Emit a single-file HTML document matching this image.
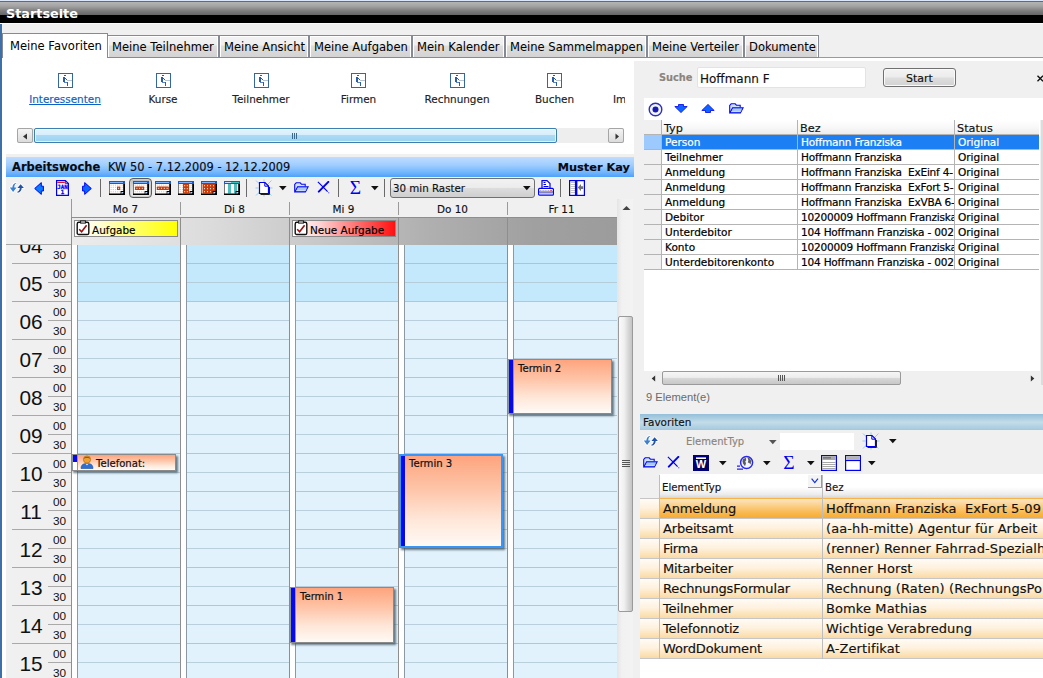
<!DOCTYPE html>
<html lang="de">
<head>
<meta charset="utf-8">
<title>Startseite</title>
<style>
*{box-sizing:border-box;margin:0;padding:0}
html,body{width:1043px;height:678px;overflow:hidden;background:#fff}
body{position:relative;font-family:"DejaVu Sans","Liberation Sans",sans-serif;font-size:11.25px;color:#000;-webkit-text-stroke:0.15px}
.a{position:absolute}
.v{font-family:"DejaVu Sans","Liberation Sans",sans-serif}
.t{font-family:"DejaVu Sans","Liberation Sans",sans-serif}
.l{font-family:"Liberation Sans",sans-serif}
.nw{white-space:nowrap}
/* title */
#title{left:0;top:0;width:1043px;height:23px;background:linear-gradient(#dce6fa 0,#dce6fa 1px,#5a6a8c 1px,#5a6a8c 2px,#b6b4b4 2px,#a4a4a4 6px,#7c7c7c 11px,#666 15px,#000 15px,#000 100%)}
#title span{-webkit-text-stroke:0;position:absolute;left:6px;top:6px;color:#fff;font-weight:bold;font-size:12.8px;line-height:16px}
#lb{left:0;top:24px;width:2px;height:654px;background:#3d6fa8}
#tabbar{left:2px;top:23px;width:1041px;height:35px;border-top:1px solid #fbfbfb;background:#f0f0f0;border-bottom:1px solid #9a9a9a}
.tab{position:absolute;top:35px;height:23px;border:1px solid #868a96;background:linear-gradient(#f3f3f3 0,#efefef 9px,#dedede 10px,#d3d3d3 100%);box-shadow:inset 1px 1px 0 #fff,inset -1px 0 0 #fff;font-size:11.55px;line-height:23px;text-align:left;padding-left:4px;white-space:nowrap;-webkit-text-stroke:0}
.tab.act{top:33px;height:25px;background:#fff;border-bottom:none;line-height:24px;box-shadow:none;z-index:2;padding-left:7px}

.fl{top:92px;width:100px;text-align:center;font-size:10.45px;line-height:14px}
.sbb{width:16px;height:15px;border:1px solid #a5a5a5;border-radius:2px;background:linear-gradient(#f4f4f4,#dcdcdc)}
/*CALCSS*/
.dh{top:202px;text-align:center;font-size:10.45px;line-height:15px;color:#111}
.gd{background:repeating-linear-gradient(#c4e9fc 0,#c4e9fc 18px,#9fc9e3 18px,#9fc9e3 19px,#c4e9fc 19px,#c4e9fc 37px,#b5cdda 37px,#b5cdda 38px)}
.gl{background:repeating-linear-gradient(#a2cbe4 0,#a2cbe4 1px,#e2f2fc 1px,#e2f2fc 19px,#b9d0dc 19px,#b9d0dc 20px,#e2f2fc 20px,#e2f2fc 38px)}
.hr{-webkit-text-stroke:0;font-size:20.8px;line-height:24px;color:#111;width:24px;text-align:center}
.mn{-webkit-text-stroke:0;font-size:11.8px;line-height:12px;color:#111}
.ap{border:1px solid #8a8a8a;box-shadow:2px 2px 2px rgba(60,80,95,.75);background:linear-gradient(#fda47e 0,#fec3a6 35%,#ffe6d8 70%,#fffaf6 100%)}
.ap span{-webkit-text-stroke:0.2px;position:absolute;left:10px;top:1.5px;font-size:10.09px;line-height:14px;white-space:nowrap;color:#111}
/*CALCSS_END*//*RCSS*/
.th1{top:121px;font-size:11.25px;line-height:15px;color:#111}
.td1{font-size:10.54px;line-height:14px;white-space:pre;-webkit-text-stroke:0.2px}
.r2{height:20px;border-bottom:1px solid #c6c6c6;background:linear-gradient(#fffbf5 0,#fef2e0 45%,#fce3ba 80%,#fbd9a4 100%);font-size:13px;line-height:19px;color:#111;white-space:pre}
.r2s{background:linear-gradient(#fde6c2 0,#fbcf88 35%,#f9b74c 75%,#f8aa32 100%)}
/*RCSS_END*/</style>
</head>
<body>
<div id="title" class="a"><span class="v">Startseite</span></div>
<div id="lb" class="a"></div>
<div id="tabbar" class="a"></div>
<div class="tab act" style="left:2px;width:106px">Meine Favoriten</div>
<div class="tab" style="left:107px;width:112px">Meine Teilnehmer</div>
<div class="tab" style="left:219px;width:90px">Meine Ansicht</div>
<div class="tab" style="left:309px;width:103px">Meine Aufgaben</div>
<div class="tab" style="left:412px;width:93px">Mein Kalender</div>
<div class="tab" style="left:505px;width:142px">Meine Sammelmappen</div>
<div class="tab" style="left:647px;width:97px">Meine Verteiler</div>
<div class="tab" style="left:744px;width:75px">Dokumente</div>
<div id="favbar">
<svg class="a" style="left:58px;top:73px" width="15" height="15" viewBox="0 0 15 15"><rect x=".5" y=".5" width="14" height="14" fill="#fff" stroke="#3465a4"/><rect x="6" y="2" width="2" height="1" fill="#2a5ca8"/><rect x="5" y="4" width="2" height="5" fill="#2a5ca8"/><rect x="7" y="5" width="1" height="1" fill="#2a5ca8"/><rect x="8" y="6" width="1" height="1" fill="#2a5ca8"/><rect x="6" y="9" width="4" height="1" fill="#5d86bf"/><rect x="9" y="9" width="1" height="4" fill="#2a5ca8"/><rect x="9" y="7" width="5" height="1" fill="#b9c3d0"/></svg>
<div class="a t nw fl" style="left:15px;color:#0b62c4;text-decoration:underline;">Interessenten</div>
<svg class="a" style="left:156px;top:73px" width="15" height="15" viewBox="0 0 15 15"><rect x=".5" y=".5" width="14" height="14" fill="#fff" stroke="#3465a4"/><rect x="6" y="2" width="2" height="1" fill="#2a5ca8"/><rect x="5" y="4" width="2" height="5" fill="#2a5ca8"/><rect x="7" y="5" width="1" height="1" fill="#2a5ca8"/><rect x="8" y="6" width="1" height="1" fill="#2a5ca8"/><rect x="6" y="9" width="4" height="1" fill="#5d86bf"/><rect x="9" y="9" width="1" height="4" fill="#2a5ca8"/><rect x="9" y="7" width="5" height="1" fill="#b9c3d0"/></svg>
<div class="a t nw fl" style="left:113px;color:#222;">Kurse</div>
<svg class="a" style="left:254px;top:73px" width="15" height="15" viewBox="0 0 15 15"><rect x=".5" y=".5" width="14" height="14" fill="#fff" stroke="#3465a4"/><rect x="6" y="2" width="2" height="1" fill="#2a5ca8"/><rect x="5" y="4" width="2" height="5" fill="#2a5ca8"/><rect x="7" y="5" width="1" height="1" fill="#2a5ca8"/><rect x="8" y="6" width="1" height="1" fill="#2a5ca8"/><rect x="6" y="9" width="4" height="1" fill="#5d86bf"/><rect x="9" y="9" width="1" height="4" fill="#2a5ca8"/><rect x="9" y="7" width="5" height="1" fill="#b9c3d0"/></svg>
<div class="a t nw fl" style="left:211px;color:#222;">Teilnehmer</div>
<svg class="a" style="left:351px;top:73px" width="15" height="15" viewBox="0 0 15 15"><rect x=".5" y=".5" width="14" height="14" fill="#fff" stroke="#3465a4"/><rect x="6" y="2" width="2" height="1" fill="#2a5ca8"/><rect x="5" y="4" width="2" height="5" fill="#2a5ca8"/><rect x="7" y="5" width="1" height="1" fill="#2a5ca8"/><rect x="8" y="6" width="1" height="1" fill="#2a5ca8"/><rect x="6" y="9" width="4" height="1" fill="#5d86bf"/><rect x="9" y="9" width="1" height="4" fill="#2a5ca8"/><rect x="9" y="7" width="5" height="1" fill="#b9c3d0"/></svg>
<div class="a t nw fl" style="left:308.5px;color:#222;">Firmen</div>
<svg class="a" style="left:450px;top:73px" width="15" height="15" viewBox="0 0 15 15"><rect x=".5" y=".5" width="14" height="14" fill="#fff" stroke="#3465a4"/><rect x="6" y="2" width="2" height="1" fill="#2a5ca8"/><rect x="5" y="4" width="2" height="5" fill="#2a5ca8"/><rect x="7" y="5" width="1" height="1" fill="#2a5ca8"/><rect x="8" y="6" width="1" height="1" fill="#2a5ca8"/><rect x="6" y="9" width="4" height="1" fill="#5d86bf"/><rect x="9" y="9" width="1" height="4" fill="#2a5ca8"/><rect x="9" y="7" width="5" height="1" fill="#b9c3d0"/></svg>
<div class="a t nw fl" style="left:407px;color:#222;">Rechnungen</div>
<svg class="a" style="left:547px;top:73px" width="15" height="15" viewBox="0 0 15 15"><rect x=".5" y=".5" width="14" height="14" fill="#fff" stroke="#3465a4"/><rect x="6" y="2" width="2" height="1" fill="#2a5ca8"/><rect x="5" y="4" width="2" height="5" fill="#2a5ca8"/><rect x="7" y="5" width="1" height="1" fill="#2a5ca8"/><rect x="8" y="6" width="1" height="1" fill="#2a5ca8"/><rect x="6" y="9" width="4" height="1" fill="#5d86bf"/><rect x="9" y="9" width="1" height="4" fill="#2a5ca8"/><rect x="9" y="7" width="5" height="1" fill="#b9c3d0"/></svg>
<div class="a t nw fl" style="left:504.5px;color:#222;">Buchen</div>
<svg class="a" style="left:645px;top:73px" width="15" height="15" viewBox="0 0 15 15"><rect x=".5" y=".5" width="14" height="14" fill="#fff" stroke="#3465a4"/><rect x="6" y="2" width="2" height="1" fill="#2a5ca8"/><rect x="5" y="4" width="2" height="5" fill="#2a5ca8"/><rect x="7" y="5" width="1" height="1" fill="#2a5ca8"/><rect x="8" y="6" width="1" height="1" fill="#2a5ca8"/><rect x="6" y="9" width="4" height="1" fill="#5d86bf"/><rect x="9" y="9" width="1" height="4" fill="#2a5ca8"/><rect x="9" y="7" width="5" height="1" fill="#b9c3d0"/></svg>
<div class="a t nw" style="left:613px;top:92px;width:12px;overflow:hidden;font-size:10.45px;line-height:14px;color:#222">Im</div>
<div class="a" style="left:17px;top:128px;width:607px;height:15px;background:#eeeeee"></div>
<div class="a sbb" style="left:17px;top:128px"><svg width="15" height="15" viewBox="0 0 15 15"><path d="M9 4.5 L9 10.5 L5 7.5Z" fill="#333"/></svg></div>
<div class="a sbb" style="left:608px;top:128px"><svg width="15" height="15" viewBox="0 0 15 15"><path d="M6.5 4.5 L6.5 10.5 L10 7.5Z" fill="#333"/></svg></div>
<div class="a" style="left:34px;top:128px;width:523px;height:15px;border:1px solid #3c7fb1;border-radius:2px;box-shadow:inset 0 0 0 1px rgba(255,255,255,.7);background:linear-gradient(#e3f4fc 0,#d6eefb 45%,#a9dbf6 50%,#9cd3f0 100%)"></div>
<div class="a" style="left:292px;top:133px;width:5px;height:6px;background:repeating-linear-gradient(90deg,#3b6b8c 0,#3b6b8c 1px,transparent 1px,transparent 2px)"></div>
</div>
<!--FAVBAR_END-->
<div id="cal">
<div class="a" style="left:6px;top:154px;width:628px;height:3px;background:#f0f0f0"></div>
<div class="a" style="left:6px;top:157px;width:628px;height:20px;background:linear-gradient(#bfddff 0,#a0cefe 40%,#74b7fc 75%,#4ca2fa 100%)"></div>
<div class="a v nw" style="left:12px;top:160px;font-weight:bold;font-size:11.5px;line-height:15px;color:#0a0a14">Arbeitswoche</div>
<div class="a v nw" style="left:108px;top:160px;font-size:11.4px;line-height:15px;color:#0a0a14">KW 50 - 7.12.2009 - 12.12.2009</div>
<div class="a v nw" style="left:530px;width:100px;text-align:right;top:160px;font-weight:bold;font-size:11.35px;line-height:15px;color:#0a0a14">Muster Kay</div>
<div class="a" style="left:6px;top:177px;width:628px;height:67px;background:#f0f0f0"></div>
<div class="a" style="left:6px;top:244px;width:65px;height:434px;background:#f0f0f0"></div>
<!--CALTB_START--><svg class="a" style="left:9px;top:182px" width="16" height="12" viewBox="0 0 16 12"><g stroke="#fff" stroke-width="1.6" paint-order="stroke" stroke-linejoin="round"><path d="M7 0.9 C4.6 1.2 3.4 3 3.4 5.6 L0.8 5.6 L4.1 10 L7.6 5.6 L5.3 5.6 C5.3 3.6 5.8 2.2 7.2 1.6Z" fill="#3b7fd0"/><path d="M11.6 2.2 L14.9 5.9 L12.7 5.9 C12.6 8.2 11.4 10.2 8.6 10.8 L8.3 9.7 C10 9 10.7 7.7 10.8 5.9 L8.4 5.9Z" fill="#2252a6"/></g><path d="M6 1.3 C6.4 1 6.8 .9 7.2 .9 L7.2 1.6 C6.9 1.7 6.6 1.9 6.3 2.1Z" fill="#35b4e6"/></svg>
<svg class="a" style="left:34px;top:182px" width="10" height="13" viewBox="0 0 10 13"><path d="M0.7 6.5 L7.3 0.6 L7.3 4.2 L9.4 4.2 L9.4 9 L7.3 9 L7.3 12.4Z" fill="#0a7aff" stroke="#0000f4" stroke-width="1"/></svg>
<svg class="a" style="left:56px;top:180px" width="13" height="16" viewBox="0 0 13 16"><path d="M0.6 0.6 L9.4 0.6 L12.4 3.6 L12.4 15.4 L0.6 15.4Z" fill="#fff" stroke="#0000f4" stroke-width="1.2"/><path d="M9.4 0.6 L9.4 3.6 L12.4 3.6" fill="none" stroke="#0000f4" stroke-width=".8"/><rect x="1.2" y="2" width="7.6" height="1" fill="#f01010"/><text x="6.4" y="8.8" text-anchor="middle" font-family="DejaVu Sans Mono,Liberation Mono,monospace" font-weight="bold" font-size="5.8" fill="#0000f4" stroke="#0000f4" stroke-width=".25">JAN</text><text x="6.4" y="14" text-anchor="middle" font-family="DejaVu Sans Mono,Liberation Mono,monospace" font-weight="bold" font-size="5.8" fill="#0000f4" stroke="#0000f4" stroke-width=".25">1</text></svg>
<svg class="a" style="left:82px;top:182px" width="10" height="13" viewBox="0 0 10 13"><path d="M9.3 6.5 L2.7 0.6 L2.7 4.2 L0.6 4.2 L0.6 9 L2.7 9 L2.7 12.4Z" fill="#0a66ff" stroke="#0000f0" stroke-width="1"/></svg>
<div class="a" style="left:100px;top:179px;width:1px;height:18px;background:#6a6a6a"></div>
<svg class="a" style="left:109px;top:181px" width="16" height="14" viewBox="0 0 16 14"><rect x="0" y="0" width="16" height="14" fill="#fff"/><rect x="1.6" y="3.6" width="1.1" height="1.1" fill="#f5bd9c"/><rect x="3.8" y="3.6" width="1.1" height="1.1" fill="#f5bd9c"/><rect x="6" y="3.6" width="1.1" height="1.1" fill="#f5bd9c"/><rect x="8.2" y="3.6" width="1.1" height="1.1" fill="#f5bd9c"/><rect x="10.4" y="3.6" width="1.1" height="1.1" fill="#f5bd9c"/><rect x="12.6" y="3.6" width="1.1" height="1.1" fill="#f5bd9c"/><rect x="1.6" y="5.8" width="1.1" height="1.1" fill="#f5bd9c"/><rect x="3.8" y="5.8" width="1.1" height="1.1" fill="#f5bd9c"/><rect x="6" y="5.8" width="1.1" height="1.1" fill="#f5bd9c"/><rect x="8.2" y="5.8" width="1.1" height="1.1" fill="#f5bd9c"/><rect x="10.4" y="5.8" width="1.1" height="1.1" fill="#f5bd9c"/><rect x="12.6" y="5.8" width="1.1" height="1.1" fill="#f5bd9c"/><rect x="1.6" y="8" width="1.1" height="1.1" fill="#f5bd9c"/><rect x="3.8" y="8" width="1.1" height="1.1" fill="#f5bd9c"/><rect x="6" y="8" width="1.1" height="1.1" fill="#f5bd9c"/><rect x="8.2" y="8" width="1.1" height="1.1" fill="#f5bd9c"/><rect x="10.4" y="8" width="1.1" height="1.1" fill="#f5bd9c"/><rect x="12.6" y="8" width="1.1" height="1.1" fill="#f5bd9c"/><rect x="1.6" y="10.2" width="1.1" height="1.1" fill="#f5bd9c"/><rect x="3.8" y="10.2" width="1.1" height="1.1" fill="#f5bd9c"/><rect x="6" y="10.2" width="1.1" height="1.1" fill="#f5bd9c"/><rect x="8.2" y="10.2" width="1.1" height="1.1" fill="#f5bd9c"/><rect x="10.4" y="10.2" width="1.1" height="1.1" fill="#f5bd9c"/><rect x="12.6" y="10.2" width="1.1" height="1.1" fill="#f5bd9c"/><rect x="8" y="5.6" width="3.2" height="3.4" fill="#c83c0c"/><rect x="9.1" y="6.8" width="1" height="1" fill="#fff"/><rect x="0" y="0" width="16" height="3" fill="#1458dc"/><rect x="1" y="1" width="13" height="1" fill="#7db4ff"/><rect x="0" y="3" width="1" height="11" fill="#777"/><rect x="14.2" y="3" width="1.8" height="11" fill="#000"/><rect x="0" y="12.5" width="16" height="1.5" fill="#000"/><rect x="11.6" y="10" width="4.4" height="4" fill="#000"/><path d="M12.6 11 L14.8 11 L12.6 13.2Z" fill="#9fd0ff"/><rect x="12.6" y="11" width="1.2" height="1.2" fill="#bfe0ff"/></svg>
<div class="a" style="left:129px;top:178px;width:23px;height:20px;border:1px solid #5a5a5a;border-radius:4px;background:linear-gradient(#bdbdbd,#d8d8d8 50%,#ececec);box-shadow:inset 0 0 0 1px #cfcfcf"></div>
<svg class="a" style="left:133px;top:181px" width="16" height="14" viewBox="0 0 16 14"><rect x="0" y="0" width="16" height="14" fill="#fff"/><rect x="1.6" y="3.6" width="1.1" height="1.1" fill="#f5bd9c"/><rect x="3.8" y="3.6" width="1.1" height="1.1" fill="#f5bd9c"/><rect x="6" y="3.6" width="1.1" height="1.1" fill="#f5bd9c"/><rect x="8.2" y="3.6" width="1.1" height="1.1" fill="#f5bd9c"/><rect x="10.4" y="3.6" width="1.1" height="1.1" fill="#f5bd9c"/><rect x="12.6" y="3.6" width="1.1" height="1.1" fill="#f5bd9c"/><rect x="1.6" y="5.8" width="1.1" height="1.1" fill="#f5bd9c"/><rect x="3.8" y="5.8" width="1.1" height="1.1" fill="#f5bd9c"/><rect x="6" y="5.8" width="1.1" height="1.1" fill="#f5bd9c"/><rect x="8.2" y="5.8" width="1.1" height="1.1" fill="#f5bd9c"/><rect x="10.4" y="5.8" width="1.1" height="1.1" fill="#f5bd9c"/><rect x="12.6" y="5.8" width="1.1" height="1.1" fill="#f5bd9c"/><rect x="1.6" y="8" width="1.1" height="1.1" fill="#f5bd9c"/><rect x="3.8" y="8" width="1.1" height="1.1" fill="#f5bd9c"/><rect x="6" y="8" width="1.1" height="1.1" fill="#f5bd9c"/><rect x="8.2" y="8" width="1.1" height="1.1" fill="#f5bd9c"/><rect x="10.4" y="8" width="1.1" height="1.1" fill="#f5bd9c"/><rect x="12.6" y="8" width="1.1" height="1.1" fill="#f5bd9c"/><rect x="1.6" y="10.2" width="1.1" height="1.1" fill="#f5bd9c"/><rect x="3.8" y="10.2" width="1.1" height="1.1" fill="#f5bd9c"/><rect x="6" y="10.2" width="1.1" height="1.1" fill="#f5bd9c"/><rect x="8.2" y="10.2" width="1.1" height="1.1" fill="#f5bd9c"/><rect x="10.4" y="10.2" width="1.1" height="1.1" fill="#f5bd9c"/><rect x="12.6" y="10.2" width="1.1" height="1.1" fill="#f5bd9c"/><rect x="2" y="5.6" width="9.2" height="3.4" rx=".6" fill="#c83c0c"/><rect x="3.4" y="6.8" width="1" height="1" fill="#fff"/><rect x="6.1" y="6.8" width="1" height="1" fill="#fff"/><rect x="8.8" y="6.8" width="1" height="1" fill="#fff"/><rect x="0" y="0" width="16" height="3" fill="#1458dc"/><rect x="1" y="1" width="13" height="1" fill="#7db4ff"/><rect x="0" y="3" width="1" height="11" fill="#777"/><rect x="14.2" y="3" width="1.8" height="11" fill="#000"/><rect x="0" y="12.5" width="16" height="1.5" fill="#000"/><rect x="11.6" y="10" width="4.4" height="4" fill="#000"/><path d="M12.6 11 L14.8 11 L12.6 13.2Z" fill="#9fd0ff"/><rect x="12.6" y="11" width="1.2" height="1.2" fill="#bfe0ff"/></svg>
<svg class="a" style="left:155px;top:181px" width="16" height="14" viewBox="0 0 16 14"><rect x="0" y="0" width="16" height="14" fill="#fff"/><rect x="1.6" y="3.6" width="1.1" height="1.1" fill="#f5bd9c"/><rect x="3.8" y="3.6" width="1.1" height="1.1" fill="#f5bd9c"/><rect x="6" y="3.6" width="1.1" height="1.1" fill="#f5bd9c"/><rect x="8.2" y="3.6" width="1.1" height="1.1" fill="#f5bd9c"/><rect x="10.4" y="3.6" width="1.1" height="1.1" fill="#f5bd9c"/><rect x="12.6" y="3.6" width="1.1" height="1.1" fill="#f5bd9c"/><rect x="1.6" y="5.8" width="1.1" height="1.1" fill="#f5bd9c"/><rect x="3.8" y="5.8" width="1.1" height="1.1" fill="#f5bd9c"/><rect x="6" y="5.8" width="1.1" height="1.1" fill="#f5bd9c"/><rect x="8.2" y="5.8" width="1.1" height="1.1" fill="#f5bd9c"/><rect x="10.4" y="5.8" width="1.1" height="1.1" fill="#f5bd9c"/><rect x="12.6" y="5.8" width="1.1" height="1.1" fill="#f5bd9c"/><rect x="1.6" y="8" width="1.1" height="1.1" fill="#f5bd9c"/><rect x="3.8" y="8" width="1.1" height="1.1" fill="#f5bd9c"/><rect x="6" y="8" width="1.1" height="1.1" fill="#f5bd9c"/><rect x="8.2" y="8" width="1.1" height="1.1" fill="#f5bd9c"/><rect x="10.4" y="8" width="1.1" height="1.1" fill="#f5bd9c"/><rect x="12.6" y="8" width="1.1" height="1.1" fill="#f5bd9c"/><rect x="1.6" y="10.2" width="1.1" height="1.1" fill="#f5bd9c"/><rect x="3.8" y="10.2" width="1.1" height="1.1" fill="#f5bd9c"/><rect x="6" y="10.2" width="1.1" height="1.1" fill="#f5bd9c"/><rect x="8.2" y="10.2" width="1.1" height="1.1" fill="#f5bd9c"/><rect x="10.4" y="10.2" width="1.1" height="1.1" fill="#f5bd9c"/><rect x="12.6" y="10.2" width="1.1" height="1.1" fill="#f5bd9c"/><rect x="1.8" y="5.6" width="12" height="3.4" rx=".6" fill="#c83c0c"/><rect x="3.2" y="6.8" width="1" height="1" fill="#fff"/><rect x="6.0" y="6.8" width="1" height="1" fill="#fff"/><rect x="8.8" y="6.8" width="1" height="1" fill="#fff"/><rect x="11.6" y="6.8" width="1" height="1" fill="#fff"/><rect x="0" y="0" width="16" height="3" fill="#1458dc"/><rect x="1" y="1" width="13" height="1" fill="#7db4ff"/><rect x="0" y="3" width="1" height="11" fill="#777"/><rect x="14.2" y="3" width="1.8" height="11" fill="#000"/><rect x="0" y="12.5" width="16" height="1.5" fill="#000"/><rect x="11.6" y="10" width="4.4" height="4" fill="#000"/><path d="M12.6 11 L14.8 11 L12.6 13.2Z" fill="#9fd0ff"/><rect x="12.6" y="11" width="1.2" height="1.2" fill="#bfe0ff"/></svg>
<svg class="a" style="left:178px;top:181px" width="16" height="14" viewBox="0 0 16 14"><rect x="0" y="0" width="16" height="14" fill="#fff"/><rect x="1.6" y="3.6" width="1.1" height="1.1" fill="#f5bd9c"/><rect x="3.8" y="3.6" width="1.1" height="1.1" fill="#f5bd9c"/><rect x="6" y="3.6" width="1.1" height="1.1" fill="#f5bd9c"/><rect x="8.2" y="3.6" width="1.1" height="1.1" fill="#f5bd9c"/><rect x="10.4" y="3.6" width="1.1" height="1.1" fill="#f5bd9c"/><rect x="12.6" y="3.6" width="1.1" height="1.1" fill="#f5bd9c"/><rect x="1.6" y="5.8" width="1.1" height="1.1" fill="#f5bd9c"/><rect x="3.8" y="5.8" width="1.1" height="1.1" fill="#f5bd9c"/><rect x="6" y="5.8" width="1.1" height="1.1" fill="#f5bd9c"/><rect x="8.2" y="5.8" width="1.1" height="1.1" fill="#f5bd9c"/><rect x="10.4" y="5.8" width="1.1" height="1.1" fill="#f5bd9c"/><rect x="12.6" y="5.8" width="1.1" height="1.1" fill="#f5bd9c"/><rect x="1.6" y="8" width="1.1" height="1.1" fill="#f5bd9c"/><rect x="3.8" y="8" width="1.1" height="1.1" fill="#f5bd9c"/><rect x="6" y="8" width="1.1" height="1.1" fill="#f5bd9c"/><rect x="8.2" y="8" width="1.1" height="1.1" fill="#f5bd9c"/><rect x="10.4" y="8" width="1.1" height="1.1" fill="#f5bd9c"/><rect x="12.6" y="8" width="1.1" height="1.1" fill="#f5bd9c"/><rect x="1.6" y="10.2" width="1.1" height="1.1" fill="#f5bd9c"/><rect x="3.8" y="10.2" width="1.1" height="1.1" fill="#f5bd9c"/><rect x="6" y="10.2" width="1.1" height="1.1" fill="#f5bd9c"/><rect x="8.2" y="10.2" width="1.1" height="1.1" fill="#f5bd9c"/><rect x="10.4" y="10.2" width="1.1" height="1.1" fill="#f5bd9c"/><rect x="12.6" y="10.2" width="1.1" height="1.1" fill="#f5bd9c"/><rect x="5" y="3" width="6" height="9.5" fill="#c83c0c"/><rect x="6.2" y="4.2" width="1" height="1" fill="#fff"/><rect x="6.2" y="7.2" width="1" height="1" fill="#fff"/><rect x="6.2" y="10.2" width="1" height="1" fill="#fff"/><rect x="8.8" y="4.2" width="1" height="1" fill="#fff"/><rect x="8.8" y="7.2" width="1" height="1" fill="#fff"/><rect x="8.8" y="10.2" width="1" height="1" fill="#fff"/><rect x="0" y="0" width="16" height="3" fill="#1458dc"/><rect x="1" y="1" width="13" height="1" fill="#7db4ff"/><rect x="0" y="3" width="1" height="11" fill="#777"/><rect x="14.2" y="3" width="1.8" height="11" fill="#000"/><rect x="0" y="12.5" width="16" height="1.5" fill="#000"/><rect x="11.6" y="10" width="4.4" height="4" fill="#000"/><path d="M12.6 11 L14.8 11 L12.6 13.2Z" fill="#9fd0ff"/><rect x="12.6" y="11" width="1.2" height="1.2" fill="#bfe0ff"/></svg>
<svg class="a" style="left:201px;top:181px" width="16" height="14" viewBox="0 0 16 14"><rect x="0" y="0" width="16" height="14" fill="#fff"/><rect x="1.6" y="3.6" width="1.1" height="1.1" fill="#f5bd9c"/><rect x="3.8" y="3.6" width="1.1" height="1.1" fill="#f5bd9c"/><rect x="6" y="3.6" width="1.1" height="1.1" fill="#f5bd9c"/><rect x="8.2" y="3.6" width="1.1" height="1.1" fill="#f5bd9c"/><rect x="10.4" y="3.6" width="1.1" height="1.1" fill="#f5bd9c"/><rect x="12.6" y="3.6" width="1.1" height="1.1" fill="#f5bd9c"/><rect x="1.6" y="5.8" width="1.1" height="1.1" fill="#f5bd9c"/><rect x="3.8" y="5.8" width="1.1" height="1.1" fill="#f5bd9c"/><rect x="6" y="5.8" width="1.1" height="1.1" fill="#f5bd9c"/><rect x="8.2" y="5.8" width="1.1" height="1.1" fill="#f5bd9c"/><rect x="10.4" y="5.8" width="1.1" height="1.1" fill="#f5bd9c"/><rect x="12.6" y="5.8" width="1.1" height="1.1" fill="#f5bd9c"/><rect x="1.6" y="8" width="1.1" height="1.1" fill="#f5bd9c"/><rect x="3.8" y="8" width="1.1" height="1.1" fill="#f5bd9c"/><rect x="6" y="8" width="1.1" height="1.1" fill="#f5bd9c"/><rect x="8.2" y="8" width="1.1" height="1.1" fill="#f5bd9c"/><rect x="10.4" y="8" width="1.1" height="1.1" fill="#f5bd9c"/><rect x="12.6" y="8" width="1.1" height="1.1" fill="#f5bd9c"/><rect x="1.6" y="10.2" width="1.1" height="1.1" fill="#f5bd9c"/><rect x="3.8" y="10.2" width="1.1" height="1.1" fill="#f5bd9c"/><rect x="6" y="10.2" width="1.1" height="1.1" fill="#f5bd9c"/><rect x="8.2" y="10.2" width="1.1" height="1.1" fill="#f5bd9c"/><rect x="10.4" y="10.2" width="1.1" height="1.1" fill="#f5bd9c"/><rect x="12.6" y="10.2" width="1.1" height="1.1" fill="#f5bd9c"/><rect x="1.6" y="3" width="12.4" height="9.5" fill="#c83c0c"/><rect x="3" y="4.2" width="1" height="1" fill="#fff"/><rect x="3" y="7.2" width="1" height="1" fill="#fff"/><rect x="3" y="10.2" width="1" height="1" fill="#fff"/><rect x="6" y="4.2" width="1" height="1" fill="#fff"/><rect x="6" y="7.2" width="1" height="1" fill="#fff"/><rect x="6" y="10.2" width="1" height="1" fill="#fff"/><rect x="9" y="4.2" width="1" height="1" fill="#fff"/><rect x="9" y="7.2" width="1" height="1" fill="#fff"/><rect x="9" y="10.2" width="1" height="1" fill="#fff"/><rect x="12" y="4.2" width="1" height="1" fill="#fff"/><rect x="12" y="7.2" width="1" height="1" fill="#fff"/><rect x="12" y="10.2" width="1" height="1" fill="#fff"/><rect x="0" y="0" width="16" height="3" fill="#1458dc"/><rect x="1" y="1" width="13" height="1" fill="#7db4ff"/><rect x="0" y="3" width="1" height="11" fill="#777"/><rect x="14.2" y="3" width="1.8" height="11" fill="#000"/><rect x="0" y="12.5" width="16" height="1.5" fill="#000"/><rect x="11.6" y="10" width="4.4" height="4" fill="#000"/><path d="M12.6 11 L14.8 11 L12.6 13.2Z" fill="#9fd0ff"/><rect x="12.6" y="11" width="1.2" height="1.2" fill="#bfe0ff"/></svg>
<svg class="a" style="left:224px;top:181px" width="16" height="14" viewBox="0 0 16 14"><rect x="0" y="0" width="16" height="14" fill="#fff"/><rect x="4" y="3" width="3" height="9.5" fill="#4fbdbd"/><rect x="10" y="3" width="3" height="9.5" fill="#4fbdbd"/><rect x="0" y="0" width="16" height="3" fill="#1458dc"/><rect x="1" y="1" width="6" height="1" fill="#cfe0ff"/><rect x="7" y="1" width="8" height="1" fill="#3cc0c0"/><rect x="0" y="3" width="1" height="11" fill="#777"/><rect x="14.2" y="3" width="1.8" height="11" fill="#000"/><rect x="0" y="12.5" width="16" height="1.5" fill="#000"/><rect x="11.6" y="10" width="4.4" height="4" fill="#000"/><path d="M12.6 11 L14.8 11 L12.6 13.2Z" fill="#9fd0ff"/><rect x="12.6" y="11" width="1.2" height="1.2" fill="#bfe0ff"/></svg>
<div class="a" style="left:246px;top:179px;width:1px;height:18px;background:#6a6a6a"></div>
<svg class="a" style="left:255px;top:179px" width="18" height="18" viewBox="0 0 18 18"><g stroke="#8fd0f4" stroke-width="1"><path d="M1 1.5 L6 6.5"/><path d="M16.5 1.5 L12 6"/><path d="M1 16.5 L5 12.5"/><path d="M16.5 16.5 L13 13"/><path d="M0.5 9 L3.5 9"/><path d="M14.5 9 L17.5 9"/><path d="M9 0.5 L9 3"/><path d="M9 15 L9 17.5"/></g><path d="M5.5 15.5 L14.5 15.5 L14.5 8" fill="none" stroke="#222" stroke-width="1"/><path d="M4.5 3.5 L10 3.5 L13.5 7 L13.5 14.5 L4.5 14.5Z" fill="#fff" stroke="#0000f0" stroke-width="1.2"/><path d="M9.8 3.6 L9.8 7.2 L13.4 7.2" fill="none" stroke="#0000f0" stroke-width="1"/></svg>
<svg class="a" style="left:279px;top:186px" width="8" height="5" viewBox="0 0 8 5"><path d="M0 0 L7.6 0 L3.8 4.3Z" fill="#111"/></svg>
<svg class="a" style="left:294px;top:182px" width="15" height="11" viewBox="0 0 15 11"><path d="M0.7 9.8 L0.7 2.5 L2.2 0.8 L6.2 0.8 L7.4 2.2 L11.2 2.2 L11.2 4.6" fill="#cfe2fb" stroke="#0a0af0" stroke-width="1.1"/><path d="M0.8 9.9 L3.6 4.7 L14.2 4.7 L11.4 9.9Z" fill="#8fb8ee" stroke="#0a0af0" stroke-width="1.1"/><path d="M3.2 7 L12.6 7 M2.4 8.5 L11.8 8.5" stroke="#dfeafc" stroke-width=".7"/></svg>
<svg class="a" style="left:317px;top:181px" width="13.5" height="13" viewBox="0 0 15 14"><path d="M1 0.8 L11.8 11.6" stroke="#0000f0" stroke-width="1.3" fill="none"/><rect x="12.6" y="12.4" width="1" height="1" fill="#0000f0"/><path d="M12.6 0.8 L2 11.6" stroke="#0000f0" stroke-width="2.2" fill="none" stroke-linecap="round"/></svg>
<div class="a" style="left:338px;top:179px;width:1px;height:18px;background:#6a6a6a"></div>
<div class="a nw" style="left:348.5px;top:178px;-webkit-text-stroke:0;font-family:'Liberation Serif',serif;font-size:19.5px;line-height:20px;color:#0000f0;width:14px;text-align:center">Σ</div>
<svg class="a" style="left:371px;top:186px" width="8" height="5" viewBox="0 0 8 5"><path d="M0 0 L7.6 0 L3.8 4.3Z" fill="#111"/></svg>
<div class="a" style="left:384px;top:179px;width:1px;height:18px;background:#6a6a6a"></div>
<div class="a t nw" style="left:390px;top:178px;width:145px;height:20px;border:1px solid #707070;border-radius:3px;background:linear-gradient(#f2f2f2 0,#ebebeb 50%,#dddddd 50%,#cfcfcf 100%);font-size:10.27px;line-height:18px;padding-left:2px;color:#111">30 min Raster</div>
<svg class="a" style="left:523px;top:186px" width="8" height="5" viewBox="0 0 8 5"><path d="M0 0 L7.6 0 L3.8 4.3Z" fill="#111"/></svg>
<svg class="a" style="left:538px;top:180px" width="16" height="16" viewBox="0 0 16 16"><path d="M4 8 L4 0.6 L9 0.6 L12 3.6 L12 8" fill="#fff" stroke="#0000f0" stroke-width="1.2"/><path d="M5.5 2.5 L7.5 2.5 M5.5 4.5 L8 4.5 M5.5 6.5 L10.5 6.5" stroke="#0000f0" stroke-width="1.1"/><rect x="0.6" y="8.4" width="14.8" height="6.8" rx="1" fill="#fff" stroke="#0000f0" stroke-width="1.2"/><path d="M2 10.5 L12 10.5" stroke="#b0b0b0" stroke-width="1.2" stroke-dasharray="1 .6"/><rect x="12.4" y="9.8" width="1.3" height="1.3" fill="#f01010"/><rect x="1.6" y="12.2" width="12.8" height="1.8" fill="#cfc8a0"/><rect x="0.6" y="11.6" width="14.8" height=".8" fill="#0000f0"/></svg>
<div class="a" style="left:560px;top:179px;width:1px;height:18px;background:#6a6a6a"></div>
<svg class="a" style="left:569px;top:180px" width="16" height="16" viewBox="0 0 16 16"><rect x="0.6" y="0.6" width="14.8" height="14.8" fill="#fff" stroke="#0000f0" stroke-width="1.2"/><g fill="#c4c4c4"><rect x="1.4" y="2" width="4.6" height="1"/><rect x="1.4" y="4" width="4.6" height="1"/><rect x="1.4" y="6" width="4.6" height="1"/><rect x="1.4" y="8" width="4.6" height="1"/><rect x="1.4" y="10" width="4.6" height="1"/><rect x="1.4" y="12" width="4.6" height="1"/></g><rect x="5.9" y="0.6" width="2.5" height="14.8" fill="#0000f0"/><path d="M8.8 7.6 L12 4 L12 6.2 L14.2 6.2 L14.2 9 L12 9 L12 11.2Z" fill="#707070"/></svg><!--CALTB_END-->
<div class="a t nw dh" style="left:71px;width:109px">Mo 7</div>
<div class="a" style="left:71px;top:199px;width:1px;height:18px;background:#9a9a9a"></div>
<div class="a t nw dh" style="left:180px;width:109px">Di 8</div>
<div class="a" style="left:180px;top:202px;width:1px;height:13px;background:#9a9a9a"></div>
<div class="a t nw dh" style="left:289px;width:109px">Mi 9</div>
<div class="a" style="left:289px;top:202px;width:1px;height:13px;background:#9a9a9a"></div>
<div class="a t nw dh" style="left:398px;width:109px">Do 10</div>
<div class="a" style="left:398px;top:202px;width:1px;height:13px;background:#9a9a9a"></div>
<div class="a t nw dh" style="left:507px;width:109px">Fr 11</div>
<div class="a" style="left:507px;top:202px;width:1px;height:13px;background:#9a9a9a"></div>
<div class="a" style="left:71px;top:217px;width:546px;height:28px;border-top:1px solid #8e8e8e;background:linear-gradient(90deg,#ececec 0,#dcdcdc 25%,#c8c8c8 45%,#b0b0b0 65%,#a0a0a0 85%,#9c9c9c 100%)"></div>
<div class="a" style="left:71px;top:217px;width:1px;height:461px;background:#8e8e8e"></div>
<div class="a" style="left:72px;top:245px;width:5px;height:433px;background:#fff"></div>
<div class="a" style="left:77px;top:245px;width:1px;height:433px;background:#8c98a2"></div>
<div class="a gd" style="left:78px;top:245px;width:102px;height:56px"></div>
<div class="a gl" style="left:78px;top:301px;width:102px;height:377px"></div>
<div class="a" style="left:180px;top:217px;width:1px;height:461px;background:#8e8e8e"></div>
<div class="a" style="left:181px;top:245px;width:5px;height:433px;background:#fff"></div>
<div class="a" style="left:186px;top:245px;width:1px;height:433px;background:#8c98a2"></div>
<div class="a gd" style="left:187px;top:245px;width:102px;height:56px"></div>
<div class="a gl" style="left:187px;top:301px;width:102px;height:377px"></div>
<div class="a" style="left:289px;top:217px;width:1px;height:461px;background:#8e8e8e"></div>
<div class="a" style="left:290px;top:245px;width:5px;height:433px;background:#fff"></div>
<div class="a" style="left:295px;top:245px;width:1px;height:433px;background:#8c98a2"></div>
<div class="a gd" style="left:296px;top:245px;width:102px;height:56px"></div>
<div class="a gl" style="left:296px;top:301px;width:102px;height:377px"></div>
<div class="a" style="left:398px;top:217px;width:1px;height:461px;background:#8e8e8e"></div>
<div class="a" style="left:399px;top:245px;width:5px;height:433px;background:#fff"></div>
<div class="a" style="left:404px;top:245px;width:1px;height:433px;background:#8c98a2"></div>
<div class="a gd" style="left:405px;top:245px;width:102px;height:56px"></div>
<div class="a gl" style="left:405px;top:301px;width:102px;height:377px"></div>
<div class="a" style="left:507px;top:217px;width:1px;height:461px;background:#8e8e8e"></div>
<div class="a" style="left:508px;top:245px;width:5px;height:433px;background:#fff"></div>
<div class="a" style="left:513px;top:245px;width:1px;height:433px;background:#8c98a2"></div>
<div class="a gd" style="left:514px;top:245px;width:103px;height:56px"></div>
<div class="a gl" style="left:514px;top:301px;width:103px;height:377px"></div>
<div class="a" style="left:48px;top:244px;width:23px;height:1px;background:#a9a9a9"></div>
<div class="a l nw hr" style="left:19px;top:234px">04</div>
<div class="a l nw mn" style="left:53px;top:249px">30</div>
<div class="a" style="left:12px;top:263px;width:59px;height:1px;background:#a9a9a9"></div>
<div class="a" style="left:48px;top:282px;width:23px;height:1px;background:#a9a9a9"></div>
<div class="a l nw hr" style="left:19px;top:272px">05</div>
<div class="a l nw mn" style="left:53px;top:268px">00</div>
<div class="a l nw mn" style="left:53px;top:287px">30</div>
<div class="a" style="left:12px;top:301px;width:59px;height:1px;background:#a9a9a9"></div>
<div class="a" style="left:48px;top:320px;width:23px;height:1px;background:#a9a9a9"></div>
<div class="a l nw hr" style="left:19px;top:310px">06</div>
<div class="a l nw mn" style="left:53px;top:306px">00</div>
<div class="a l nw mn" style="left:53px;top:325px">30</div>
<div class="a" style="left:12px;top:339px;width:59px;height:1px;background:#a9a9a9"></div>
<div class="a" style="left:48px;top:358px;width:23px;height:1px;background:#a9a9a9"></div>
<div class="a l nw hr" style="left:19px;top:348px">07</div>
<div class="a l nw mn" style="left:53px;top:344px">00</div>
<div class="a l nw mn" style="left:53px;top:363px">30</div>
<div class="a" style="left:12px;top:377px;width:59px;height:1px;background:#a9a9a9"></div>
<div class="a" style="left:48px;top:396px;width:23px;height:1px;background:#a9a9a9"></div>
<div class="a l nw hr" style="left:19px;top:386px">08</div>
<div class="a l nw mn" style="left:53px;top:382px">00</div>
<div class="a l nw mn" style="left:53px;top:401px">30</div>
<div class="a" style="left:12px;top:415px;width:59px;height:1px;background:#a9a9a9"></div>
<div class="a" style="left:48px;top:434px;width:23px;height:1px;background:#a9a9a9"></div>
<div class="a l nw hr" style="left:19px;top:424px">09</div>
<div class="a l nw mn" style="left:53px;top:420px">00</div>
<div class="a l nw mn" style="left:53px;top:439px">30</div>
<div class="a" style="left:12px;top:453px;width:59px;height:1px;background:#a9a9a9"></div>
<div class="a" style="left:48px;top:472px;width:23px;height:1px;background:#a9a9a9"></div>
<div class="a l nw hr" style="left:19px;top:462px">10</div>
<div class="a l nw mn" style="left:53px;top:458px">00</div>
<div class="a l nw mn" style="left:53px;top:477px">30</div>
<div class="a" style="left:12px;top:491px;width:59px;height:1px;background:#a9a9a9"></div>
<div class="a" style="left:48px;top:510px;width:23px;height:1px;background:#a9a9a9"></div>
<div class="a l nw hr" style="left:19px;top:500px">11</div>
<div class="a l nw mn" style="left:53px;top:496px">00</div>
<div class="a l nw mn" style="left:53px;top:515px">30</div>
<div class="a" style="left:12px;top:529px;width:59px;height:1px;background:#a9a9a9"></div>
<div class="a" style="left:48px;top:548px;width:23px;height:1px;background:#a9a9a9"></div>
<div class="a l nw hr" style="left:19px;top:538px">12</div>
<div class="a l nw mn" style="left:53px;top:534px">00</div>
<div class="a l nw mn" style="left:53px;top:553px">30</div>
<div class="a" style="left:12px;top:567px;width:59px;height:1px;background:#a9a9a9"></div>
<div class="a" style="left:48px;top:586px;width:23px;height:1px;background:#a9a9a9"></div>
<div class="a l nw hr" style="left:19px;top:576px">13</div>
<div class="a l nw mn" style="left:53px;top:572px">00</div>
<div class="a l nw mn" style="left:53px;top:591px">30</div>
<div class="a" style="left:12px;top:605px;width:59px;height:1px;background:#a9a9a9"></div>
<div class="a" style="left:48px;top:624px;width:23px;height:1px;background:#a9a9a9"></div>
<div class="a l nw hr" style="left:19px;top:614px">14</div>
<div class="a l nw mn" style="left:53px;top:610px">00</div>
<div class="a l nw mn" style="left:53px;top:629px">30</div>
<div class="a" style="left:12px;top:643px;width:59px;height:1px;background:#a9a9a9"></div>
<div class="a" style="left:48px;top:662px;width:23px;height:1px;background:#a9a9a9"></div>
<div class="a l nw hr" style="left:19px;top:652px">15</div>
<div class="a l nw mn" style="left:53px;top:648px">00</div>
<div class="a l nw mn" style="left:53px;top:667px">30</div>
<div class="a" style="left:6px;top:217px;width:65px;height:27px;background:#f0f0f0"></div>
<div class="a" style="left:6px;top:244px;width:65px;height:1px;background:#a9a9a9"></div>
<div class="a t nw" style="left:74px;top:220px;width:104px;height:17px;border:1px solid #8a8a8a;background:linear-gradient(90deg,#fff 0,#fffde0 20%,#ffff66 60%,#ffff00 100%);font-size:10.45px;line-height:18px;padding-left:17px">Aufgabe</div>
<div class="a t nw" style="left:292px;top:220px;width:104px;height:17px;border:1px solid #8a8a8a;background:linear-gradient(90deg,#fff 0,#ffd6d6 25%,#ff6a6a 65%,#ff1010 100%);font-size:10.45px;line-height:18px;padding-left:17px">Neue Aufgabe</div>
<svg class="a" style="left:76px;top:220px" width="14" height="16" viewBox="0 0 14 16"><rect x="1.2" y="2.3" width="11.6" height="12.2" rx="1.6" fill="#fff" stroke="#111" stroke-width="1.4"/><rect x="4.6" y="0.9" width="4.8" height="2.2" fill="#f4f4f4" stroke="#111" stroke-width="1"/><path d="M3.2 9.3 L5.6 11.8 L10.6 5.2" fill="none" stroke="#9a1010" stroke-width="1.6"/></svg>
<svg class="a" style="left:294px;top:220px" width="14" height="16" viewBox="0 0 14 16"><rect x="1.2" y="2.3" width="11.6" height="12.2" rx="1.6" fill="#fff" stroke="#111" stroke-width="1.4"/><rect x="4.6" y="0.9" width="4.8" height="2.2" fill="#f4f4f4" stroke="#111" stroke-width="1"/><path d="M3.2 9.3 L5.6 11.8 L10.6 5.2" fill="none" stroke="#9a1010" stroke-width="1.6"/></svg>
<div class="a ap" style="left:507px;top:359px;width:105px;height:55px"><div class="a" style="left:0;top:0;width:6px;height:100%;background:#8c98a2"></div><div class="a" style="left:1px;top:0;width:4px;height:100%;background:#0808ec"></div><span class="t">Termin 2</span></div>
<div class="a ap" style="left:399px;top:454px;width:104px;height:94px;border:2px solid #3a96f6"><div class="a" style="left:0;top:0;width:4px;height:100%;background:#0808ec"></div><span class="t" style="left:8px;top:1px">Termin 3</span></div>
<div class="a ap" style="left:289px;top:587px;width:105px;height:56px"><div class="a" style="left:0;top:0;width:6px;height:100%;background:#8c98a2"></div><div class="a" style="left:1px;top:0;width:4px;height:100%;background:#0808ec"></div><span class="t">Termin 1</span></div>
<div class="a ap" style="left:71px;top:454px;width:105px;height:17px"><div class="a" style="left:0;top:0;width:6px;height:100%;background:#8c98a2"></div><div class="a" style="left:1px;top:0;width:4px;height:100%;background:#fff"></div><div class="a" style="left:1px;top:0;width:4px;height:7px;background:#0808ec"></div><span class="t" style="left:24px;top:1.5px">Telefonat:</span></div>
<svg class="a" style="left:80px;top:455px" width="14" height="14" viewBox="0 0 14 14"><path d="M1 13.5 C1 9.5 3.5 8.5 7 8.5 C10.5 8.5 13 9.5 13 13.5 Z" fill="#2f6fd0" stroke="#1c4fa0" stroke-width=".6"/><path d="M5.5 8.8 L7 10.5 L8.5 8.8Z" fill="#dfe9f7"/><circle cx="7" cy="4.5" r="3.6" fill="#f0a030" stroke="#b06a10" stroke-width=".7"/><path d="M3.6 3.8 C4.5 1 9.5 1 10.4 3.8 C9 2.8 5 2.8 3.6 3.8Z" fill="#8a5a20"/></svg>
<div class="a" style="left:617px;top:199px;width:17px;height:479px;background:#f0f0f0"></div>
<div class="a" style="left:617px;top:199px;width:16px;height:479px;background:linear-gradient(90deg,#e4e4e4,#f1f1f1 30%,#f3f3f3)"></div>
<svg class="a" style="left:622px;top:205px" width="9" height="6" viewBox="0 0 9 6"><path d="M0.5 5 L4.5 1 L8.5 5Z" fill="#444"/></svg>
<div class="a" style="left:618px;top:316px;width:15px;height:296px;border:1px solid #9a9a9a;border-radius:2px;background:linear-gradient(90deg,#fafafa 0,#f0f0f0 40%,#dcdcdc 65%,#c4c4c8 100%)"></div>
<div class="a" style="left:622px;top:460px;width:8px;height:7px;background:repeating-linear-gradient(#555 0,#555 1px,transparent 1px,transparent 2px)"></div>
</div>
<!--CAL_END-->
<div id="right">
<div class="a" style="left:634px;top:61px;width:409px;height:353px;background:#f0f0f0"></div>
<div class="a" style="left:633px;top:414px;width:7px;height:264px;background:#f0f0f0"></div>
<div class="a t nw" style="left:659px;top:71px;font-weight:bold;font-size:9.82px;line-height:14px;color:#8d847c">Suche</div>
<div class="a v nw" style="left:697px;top:67px;width:169px;height:21px;border:1px solid #e3e3e3;border-radius:2px;background:#fff;font-size:12px;line-height:22px;padding-left:2px;color:#111">Hoffmann F</div>
<div class="a v nw" style="left:883px;top:68px;width:73px;height:19px;border:1px solid #707070;border-radius:3px;background:linear-gradient(#f3f3f3 0,#ececec 48%,#dedede 52%,#d2d2d2 100%);box-shadow:inset 0 0 0 1px #fafafa;font-size:11px;line-height:19px;text-align:center;color:#111">Start</div>
<svg class="a" style="left:1037px;top:75px" width="7" height="7" viewBox="0 0 7 7"><path d="M0.5 0.8 L6 6.3 M6 0.8 L0.5 6.3" stroke="#111" stroke-width="1.4"/></svg>
<div class="a" style="left:644px;top:98px;width:399px;height:22px;background:#fff"></div>
<svg class="a" style="left:647.5px;top:101.5px" width="15" height="15" viewBox="0 0 15 15"><circle cx="7.5" cy="7.5" r="6.3" fill="#f2f6ff" stroke="#3030b8" stroke-width="1.4"/><circle cx="7.5" cy="7.5" r="3" fill="#1818b4"/></svg>
<svg class="a" style="left:674px;top:104px" width="14" height="9" viewBox="0 0 14 9"><path d="M4.5 0.5 L9.5 0.5 L9.5 2.5 L13.2 2.5 L7 8.6 L0.8 2.5 L4.5 2.5Z" fill="#0a66ff" stroke="#0000f0" stroke-width=".8"/></svg>
<svg class="a" style="left:701px;top:104px" width="14" height="9" viewBox="0 0 14 9"><path d="M4.5 8.5 L9.5 8.5 L9.5 6.5 L13.2 6.5 L7 0.4 L0.8 6.5 L4.5 6.5Z" fill="#0a66ff" stroke="#0000f0" stroke-width=".8"/></svg>
<svg class="a" style="left:729px;top:103px" width="15" height="11" viewBox="0 0 15 11"><path d="M0.7 9.8 L0.7 2.5 L2.2 0.8 L6.2 0.8 L7.4 2.2 L11.2 2.2 L11.2 4.6" fill="#cfe2fb" stroke="#0a0af0" stroke-width="1.1"/><path d="M0.8 9.9 L3.6 4.7 L14.2 4.7 L11.4 9.9Z" fill="#8fb8ee" stroke="#0a0af0" stroke-width="1.1"/><path d="M3.2 7 L12.6 7 M2.4 8.5 L11.8 8.5" stroke="#dfeafc" stroke-width=".7"/></svg>
<div class="a" style="left:644px;top:120px;width:396px;height:251px;background:#fff"></div>
<div class="a" style="left:1041px;top:120px;width:2px;height:265px;background:#dcdcdc"></div>
<div class="a" style="left:644px;top:120px;width:395px;height:15px;background:linear-gradient(#ffffff,#f8f8f8 50%,#ebebeb)"></div>
<div class="a" style="left:644px;top:120px;width:17px;height:150px;background:#f0f0f0"></div>
<div class="a v nw th1" style="left:664px">Typ</div><div class="a v nw th1" style="left:800px">Bez</div><div class="a v nw th1" style="left:957px">Status</div>
<div class="a" style="left:644px;top:135px;width:17px;height:14px;background:#9ccaff"></div>
<div class="a" style="left:662px;top:135px;width:377px;height:14px;background:#1c80f4"></div>
<div class="a" style="left:644px;top:149px;width:395px;height:1px;background:#b4b4b4"></div>
<div class="a t nw td1" style="left:665px;top:135px;color:#fff">Person</div>
<div class="a t nw td1" style="left:801px;top:135px;width:153px;overflow:hidden;letter-spacing:-0.2px;color:#fff">Hoffmann Franziska</div>
<div class="a t nw td1" style="left:958px;top:135px;color:#fff">Original</div>
<div class="a" style="left:644px;top:164px;width:395px;height:1px;background:#b4b4b4"></div>
<div class="a t nw td1" style="left:665px;top:150px;color:#000">Teilnehmer</div>
<div class="a t nw td1" style="left:801px;top:150px;width:153px;overflow:hidden;letter-spacing:-0.2px;color:#000">Hoffmann Franziska</div>
<div class="a t nw td1" style="left:958px;top:150px;color:#000">Original</div>
<div class="a" style="left:644px;top:179px;width:395px;height:1px;background:#b4b4b4"></div>
<div class="a t nw td1" style="left:665px;top:165px;color:#000">Anmeldung</div>
<div class="a t nw td1" style="left:801px;top:165px;width:153px;overflow:hidden;letter-spacing:-0.2px;color:#000">Hoffmann Franziska  ExEinf 4-</div>
<div class="a t nw td1" style="left:958px;top:165px;color:#000">Original</div>
<div class="a" style="left:644px;top:194px;width:395px;height:1px;background:#b4b4b4"></div>
<div class="a t nw td1" style="left:665px;top:180px;color:#000">Anmeldung</div>
<div class="a t nw td1" style="left:801px;top:180px;width:153px;overflow:hidden;letter-spacing:-0.2px;color:#000">Hoffmann Franziska  ExFort 5-</div>
<div class="a t nw td1" style="left:958px;top:180px;color:#000">Original</div>
<div class="a" style="left:644px;top:209px;width:395px;height:1px;background:#b4b4b4"></div>
<div class="a t nw td1" style="left:665px;top:195px;color:#000">Anmeldung</div>
<div class="a t nw td1" style="left:801px;top:195px;width:153px;overflow:hidden;letter-spacing:-0.2px;color:#000">Hoffmann Franziska  ExVBA 6-</div>
<div class="a t nw td1" style="left:958px;top:195px;color:#000">Original</div>
<div class="a" style="left:644px;top:224px;width:395px;height:1px;background:#b4b4b4"></div>
<div class="a t nw td1" style="left:665px;top:210px;color:#000">Debitor</div>
<div class="a t nw td1" style="left:801px;top:210px;width:153px;overflow:hidden;letter-spacing:-0.2px;color:#000">10200009 Hoffmann Franziska</div>
<div class="a t nw td1" style="left:958px;top:210px;color:#000">Original</div>
<div class="a" style="left:644px;top:239px;width:395px;height:1px;background:#b4b4b4"></div>
<div class="a t nw td1" style="left:665px;top:225px;color:#000">Unterdebitor</div>
<div class="a t nw td1" style="left:801px;top:225px;width:153px;overflow:hidden;letter-spacing:-0.2px;color:#000">104 Hoffmann Franziska - 002</div>
<div class="a t nw td1" style="left:958px;top:225px;color:#000">Original</div>
<div class="a" style="left:644px;top:254px;width:395px;height:1px;background:#b4b4b4"></div>
<div class="a t nw td1" style="left:665px;top:240px;color:#000">Konto</div>
<div class="a t nw td1" style="left:801px;top:240px;width:153px;overflow:hidden;letter-spacing:-0.2px;color:#000">10200009 Hoffmann Franziska</div>
<div class="a t nw td1" style="left:958px;top:240px;color:#000">Original</div>
<div class="a" style="left:644px;top:269px;width:395px;height:1px;background:#b4b4b4"></div>
<div class="a t nw td1" style="left:665px;top:255px;color:#000">Unterdebitorenkonto</div>
<div class="a t nw td1" style="left:801px;top:255px;width:153px;overflow:hidden;letter-spacing:-0.2px;color:#000">104 Hoffmann Franziska - 002</div>
<div class="a t nw td1" style="left:958px;top:255px;color:#000">Original</div>
<div class="a" style="left:644px;top:134px;width:395px;height:1px;background:#b4b4b4"></div>
<div class="a" style="left:661px;top:120px;width:1px;height:150px;background:#b4b4b4"></div>
<div class="a" style="left:797px;top:120px;width:1px;height:150px;background:#b4b4b4"></div>
<div class="a" style="left:954px;top:120px;width:1px;height:150px;background:#b4b4b4"></div>
<div class="a" style="left:644px;top:371px;width:396px;height:15px;background:#f0f0f0"></div>
<svg class="a" style="left:651px;top:374.5px" width="5" height="7" viewBox="0 0 6 8"><path d="M5 0.5 L5 7.5 L0.8 4Z" fill="#333"/></svg>
<svg class="a" style="left:1030px;top:374.5px" width="5" height="7" viewBox="0 0 6 8"><path d="M1 0.5 L1 7.5 L5.2 4Z" fill="#333"/></svg>
<div class="a" style="left:662px;top:371px;width:239px;height:14px;border:1px solid #9a9a9a;border-radius:2px;background:linear-gradient(#f6f6f6 0,#ededed 45%,#d6d6d6 55%,#c8c8c8 100%)"></div>
<div class="a" style="left:778px;top:375px;width:7px;height:6px;background:repeating-linear-gradient(90deg,#555 0,#555 1px,transparent 1px,transparent 2px)"></div>
<div class="a l nw" style="left:646px;top:389.5px;-webkit-text-stroke:0;font-size:11.2px;line-height:14px;color:#6a6a6a">9 Element(e)</div>
<div class="a" style="left:640px;top:414px;width:403px;height:264px;background:#fff"></div>
<div class="a" style="left:640px;top:414px;width:403px;height:16px;background:linear-gradient(#94bfd9 0,#c3dce9 53%,#a3c9de 100%)"></div>
<div class="a t nw" style="left:643px;top:415px;font-size:10.45px;line-height:14px;color:#111">Favoriten</div>
<div class="a" style="left:640px;top:430px;width:403px;height:45px;background:#f0f0f0"></div>
<div class="a" style="left:640px;top:474px;width:20px;height:24px;background:#f0f0f0"></div>
<svg class="a" style="left:643px;top:435px" width="16" height="12" viewBox="0 0 16 12"><g stroke="#fff" stroke-width="1.6" paint-order="stroke" stroke-linejoin="round"><path d="M7 0.9 C4.6 1.2 3.4 3 3.4 5.6 L0.8 5.6 L4.1 10 L7.6 5.6 L5.3 5.6 C5.3 3.6 5.8 2.2 7.2 1.6Z" fill="#3b7fd0"/><path d="M11.6 2.2 L14.9 5.9 L12.7 5.9 C12.6 8.2 11.4 10.2 8.6 10.8 L8.3 9.7 C10 9 10.7 7.7 10.8 5.9 L8.4 5.9Z" fill="#2252a6"/></g><path d="M6 1.3 C6.4 1 6.8 .9 7.2 .9 L7.2 1.6 C6.9 1.7 6.6 1.9 6.3 2.1Z" fill="#35b4e6"/></svg>
<div class="a t nw" style="left:686px;top:435px;font-size:10.00px;line-height:14px;color:#8d847c">ElementTyp</div>
<svg class="a" style="left:769px;top:440px" width="8" height="5" viewBox="0 0 8 5"><path d="M0 0 L7.6 0 L3.8 4.3Z" fill="#555"/></svg>
<div class="a" style="left:780px;top:433px;width:74px;height:17px;background:#fff"></div>
<svg class="a" style="left:862px;top:432px" width="18" height="18" viewBox="0 0 18 18"><g stroke="#8fd0f4" stroke-width="1"><path d="M1 1.5 L6 6.5"/><path d="M16.5 1.5 L12 6"/><path d="M1 16.5 L5 12.5"/><path d="M16.5 16.5 L13 13"/><path d="M0.5 9 L3.5 9"/><path d="M14.5 9 L17.5 9"/><path d="M9 0.5 L9 3"/><path d="M9 15 L9 17.5"/></g><path d="M5.5 15.5 L14.5 15.5 L14.5 8" fill="none" stroke="#222" stroke-width="1"/><path d="M4.5 3.5 L10 3.5 L13.5 7 L13.5 14.5 L4.5 14.5Z" fill="#fff" stroke="#0000f0" stroke-width="1.2"/><path d="M9.8 3.6 L9.8 7.2 L13.4 7.2" fill="none" stroke="#0000f0" stroke-width="1"/></svg>
<svg class="a" style="left:889px;top:439px" width="8" height="5" viewBox="0 0 8 5"><path d="M0 0 L7.6 0 L3.8 4.3Z" fill="#111"/></svg>
<svg class="a" style="left:643px;top:457px" width="15" height="11" viewBox="0 0 15 11"><path d="M0.7 9.8 L0.7 2.5 L2.2 0.8 L6.2 0.8 L7.4 2.2 L11.2 2.2 L11.2 4.6" fill="#cfe2fb" stroke="#0a0af0" stroke-width="1.1"/><path d="M0.8 9.9 L3.6 4.7 L14.2 4.7 L11.4 9.9Z" fill="#8fb8ee" stroke="#0a0af0" stroke-width="1.1"/><path d="M3.2 7 L12.6 7 M2.4 8.5 L11.8 8.5" stroke="#dfeafc" stroke-width=".7"/></svg>
<svg class="a" style="left:667px;top:456px" width="13.5" height="13" viewBox="0 0 15 14"><path d="M1 0.8 L11.8 11.6" stroke="#0000f0" stroke-width="1.3" fill="none"/><rect x="12.6" y="12.4" width="1" height="1" fill="#0000f0"/><path d="M12.6 0.8 L2 11.6" stroke="#0000f0" stroke-width="2.2" fill="none" stroke-linecap="round"/></svg>
<svg class="a" style="left:693px;top:455px" width="16" height="16" viewBox="0 0 16 16"><rect width="16" height="16" fill="#000"/><rect x=".5" y=".5" width="15" height="15" fill="none" stroke="#0000f4" stroke-width="1" stroke-dasharray="1 1"/><rect x="1.5" y="1.5" width="13" height="13" fill="none" stroke="#0000f4" stroke-width="1" stroke-dasharray="1 1" stroke-dashoffset="1"/><rect x="2" y="2" width="12" height="12" fill="#00005c"/><rect x="3" y="2.4" width="10" height="1.6" fill="#fff"/><text x="8" y="13" text-anchor="middle" font-family="Liberation Sans,sans-serif" font-weight="bold" font-size="11" fill="#fff">W</text></svg>
<svg class="a" style="left:719px;top:461px" width="8" height="5" viewBox="0 0 8 5"><path d="M0 0 L7.6 0 L3.8 4.3Z" fill="#111"/></svg>
<svg class="a" style="left:736px;top:455px" width="18" height="16" viewBox="0 0 18 16"><circle cx="10.6" cy="7.5" r="6" fill="#f6f6ff" stroke="#2828ee" stroke-width="1.5"/><path d="M7.2 4 L10 2.8 L10.2 5.4 L9.2 6.2 L10 8.2 L9 11.2 L7 8.6 L6.4 6Z" fill="#5c5c5c"/><path d="M11.4 2.6 L14 3.4 L15.2 6 L14.6 9.6 L13 7.8 L11.8 7.8 L12.4 5.2Z" fill="#5c5c5c"/><path d="M1 11.2 L4 11.2 M1 14.2 L7 14.2" stroke="#2020f0" stroke-width="1.3"/></svg>
<svg class="a" style="left:763px;top:461px" width="8" height="5" viewBox="0 0 8 5"><path d="M0 0 L7.6 0 L3.8 4.3Z" fill="#111"/></svg>
<div class="a nw" style="left:782px;top:453px;-webkit-text-stroke:0;font-family:'Liberation Serif',serif;font-size:19.5px;line-height:20px;color:#0000f0;width:14px;text-align:center">Σ</div>
<svg class="a" style="left:807px;top:461px" width="8" height="5" viewBox="0 0 8 5"><path d="M0 0 L7.6 0 L3.8 4.3Z" fill="#111"/></svg>
<svg class="a" style="left:821px;top:455px" width="16" height="16" viewBox="0 0 16 16"><rect x=".6" y=".6" width="14.8" height="14.8" fill="#fff" stroke="#0000f0" stroke-width="1.2"/><rect x="1.2" y="1.2" width="13.6" height="3.8" fill="#a8a8a8"/><rect x="2" y="2" width="8" height="1.6" fill="#777"/><g fill="#a8a8a8"><rect x="1.2" y="7" width="13.6" height="1"/><rect x="1.2" y="9" width="13.6" height="1"/><rect x="1.2" y="11" width="13.6" height="1"/><rect x="1.2" y="13" width="13.6" height="1"/></g></svg>
<svg class="a" style="left:845px;top:455px" width="16" height="16" viewBox="0 0 16 16"><rect x=".6" y=".6" width="14.8" height="14.8" fill="#fff" stroke="#0000f0" stroke-width="1.2"/><rect x="1.2" y="1.2" width="13.6" height="3.8" fill="#b4b4b4"/><rect x=".6" y="5" width="14.8" height="1.1" fill="#0000f0"/></svg>
<svg class="a" style="left:868px;top:461px" width="8" height="5" viewBox="0 0 8 5"><path d="M0 0 L7.6 0 L3.8 4.3Z" fill="#111"/></svg>
<div class="a" style="left:660px;top:474px;width:383px;height:24px;background:linear-gradient(#ffffff 0,#ffffff 55%,#ececec 85%,#d6d6d6 100%)"></div>
<div class="a" style="left:659px;top:446px;width:0;height:0"></div>
<div class="a" style="left:640px;top:498px;width:20px;height:1px;background:#c6c6c6"></div><div class="a" style="left:660px;top:498px;width:383px;height:1px;background:#f7b24a"></div>
<div class="a" style="left:659px;top:475px;width:1px;height:184px;background:#bdbdbd"></div>
<div class="a" style="left:822px;top:475px;width:1px;height:184px;background:#bdbdbd"></div>
<div class="a t nw" style="left:662px;top:481px;font-size:10.18px;line-height:14px;color:#111">ElementTyp</div>
<div class="a t nw" style="left:825px;top:481px;font-size:10.18px;line-height:14px;color:#111">Bez</div>
<div class="a" style="left:808px;top:475px;width:14px;height:13px;background:#f4f4f4;border-right:1px solid #9a9a9a;border-bottom:1px solid #9a9a9a"><svg class="a" style="left:3px;top:3px" width="8" height="6" viewBox="0 0 8 6"><path d="M0.6 0.6 L3.8 4.6 L7 0.6" fill="none" stroke="#1030e0" stroke-width="1.2"/></svg></div>
<div class="a r2" style="left:640px;top:499px;width:19px"></div>
<div class="a v nw r2 r2s" style="left:660px;top:499px;width:162px;padding-left:3px;letter-spacing:-0.15px">Anmeldung</div>
<div class="a v nw r2 r2s" style="left:823px;top:499px;width:220px;padding-left:3px;overflow:hidden;letter-spacing:0.1px">Hoffmann Franziska  ExFort 5-09</div>
<div class="a r2" style="left:640px;top:519px;width:19px"></div>
<div class="a v nw r2" style="left:660px;top:519px;width:162px;padding-left:3px;letter-spacing:-0.15px">Arbeitsamt</div>
<div class="a v nw r2" style="left:823px;top:519px;width:220px;padding-left:3px;overflow:hidden;letter-spacing:0.1px">(aa-hh-mitte) Agentur für Arbeit</div>
<div class="a r2" style="left:640px;top:539px;width:19px"></div>
<div class="a v nw r2" style="left:660px;top:539px;width:162px;padding-left:3px;letter-spacing:-0.15px">Firma</div>
<div class="a v nw r2" style="left:823px;top:539px;width:220px;padding-left:3px;overflow:hidden;letter-spacing:0.1px">(renner) Renner Fahrrad-Spezialh</div>
<div class="a r2" style="left:640px;top:559px;width:19px"></div>
<div class="a v nw r2" style="left:660px;top:559px;width:162px;padding-left:3px;letter-spacing:-0.15px">Mitarbeiter</div>
<div class="a v nw r2" style="left:823px;top:559px;width:220px;padding-left:3px;overflow:hidden;letter-spacing:0.1px">Renner Horst</div>
<div class="a r2" style="left:640px;top:579px;width:19px"></div>
<div class="a v nw r2" style="left:660px;top:579px;width:162px;padding-left:3px;letter-spacing:-0.15px">RechnungsFormular</div>
<div class="a v nw r2" style="left:823px;top:579px;width:220px;padding-left:3px;overflow:hidden;letter-spacing:0.1px">Rechnung (Raten) (RechnungsPo</div>
<div class="a r2" style="left:640px;top:599px;width:19px"></div>
<div class="a v nw r2" style="left:660px;top:599px;width:162px;padding-left:3px;letter-spacing:-0.15px">Teilnehmer</div>
<div class="a v nw r2" style="left:823px;top:599px;width:220px;padding-left:3px;overflow:hidden;letter-spacing:0.1px">Bomke Mathias</div>
<div class="a r2" style="left:640px;top:619px;width:19px"></div>
<div class="a v nw r2" style="left:660px;top:619px;width:162px;padding-left:3px;letter-spacing:-0.15px">Telefonnotiz</div>
<div class="a v nw r2" style="left:823px;top:619px;width:220px;padding-left:3px;overflow:hidden;letter-spacing:0.1px">Wichtige Verabredung</div>
<div class="a r2" style="left:640px;top:639px;width:19px"></div>
<div class="a v nw r2" style="left:660px;top:639px;width:162px;padding-left:3px;letter-spacing:-0.15px">WordDokument</div>
<div class="a v nw r2" style="left:823px;top:639px;width:220px;padding-left:3px;overflow:hidden;letter-spacing:0.1px">A-Zertifikat</div>
</div>
<!--RIGHT_END-->
</body>
</html>
